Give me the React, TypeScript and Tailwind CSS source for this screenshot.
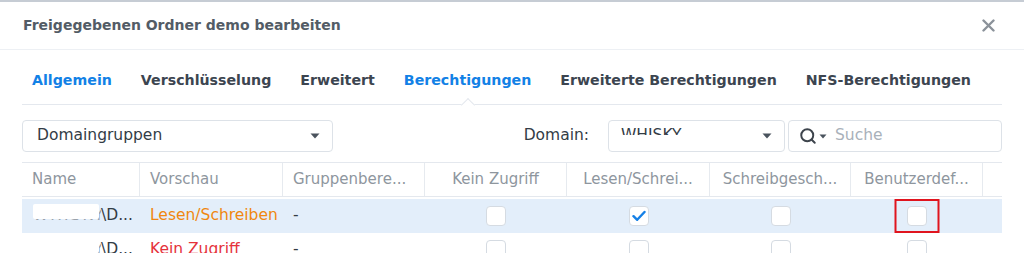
import { Search } from 'lucide-react'

const tabs = [
  { label: 'Allgemein', active: false, blue: true },
  { label: 'Verschlüsselung', active: false, blue: false },
  { label: 'Erweitert', active: false, blue: false },
  { label: 'Berechtigungen', active: true, blue: true },
  { label: 'Erweiterte Berechtigungen', active: false, blue: false },
  { label: 'NFS-Berechtigungen', active: false, blue: false },
]

const cols = ['Name', 'Vorschau', 'Gruppenbere...', 'Kein Zugriff', 'Lesen/Schrei...', 'Schreibgesch...', 'Benutzerdef...']

function Caret() {
  return (
    <svg width="10" height="6" viewBox="0 0 10 6" className="shrink-0">
      <path d="M0.5 0.5 L9.5 0.5 L5 5.5 Z" fill="#4a535d" />
    </svg>
  )
}

function Checkbox({ checked = false }: { checked?: boolean }) {
  return (
    <div className="w-[20px] h-[20px] rounded-[4px] border border-[#d5dbe2] bg-white flex items-center justify-center">
      {checked && (
        <svg width="14" height="12" viewBox="0 0 14 12">
          <path d="M1.5 6.2 L5.2 9.8 L12.5 2" fill="none" stroke="#1580e6" strokeWidth="2.4" strokeLinecap="round" strokeLinejoin="round" />
        </svg>
      )}
    </div>
  )
}

// name is blurred out in the screenshot, only the bottom edge of the letters shows
function HiddenName() {
  return (
    <div className="pl-[11px] text-[15.5px] text-[#333c46] whitespace-nowrap flex items-center">
      <span className="relative inline-block w-[68px] overflow-hidden tracking-[2px] text-[#9aa1aa]">
        WHISKY
        <span className="absolute left-0 top-0 w-[66px] h-[15px] bg-white rounded-[2px]" />
      </span>
      <span>\D...</span>
    </div>
  )
}

export default function App() {
  const rows = [
    { preview: 'Lesen/Schreiben', color: 'text-[#f0870f]', checks: [false, true, false, false], selected: true },
    { preview: 'Kein Zugriff', color: 'text-[#e5323b]', checks: [false, false, false, false], selected: false },
  ]

  return (
    <div className="w-[1024px] h-[253px] overflow-hidden bg-white" style={{ fontFamily: '"DejaVu Sans", Verdana, sans-serif' }}>
      <div className="h-[2px] bg-[#c6ccd4]" />

      {/* header */}
      <div className="h-[48px] flex items-center justify-between pl-[23px] pr-[29px] border-b border-[#edf0f4]">
        <h1 className="text-[14px] font-bold text-[#535c66]">Freigegebenen Ordner demo bearbeiten</h1>
        <svg width="13" height="13" viewBox="0 0 13 13">
          <path d="M1.5 1.5 L11.5 11.5 M11.5 1.5 L1.5 11.5" stroke="#8b929a" strokeWidth="2.4" strokeLinecap="round" />
        </svg>
      </div>

      <div className="px-[22px]">
        {/* tabs */}
        <div className="flex gap-[29px] pl-[10px] pt-[21px] pb-[14px] border-b border-[#e4e8ee]">
          {tabs.map((t) => (
            <div
              key={t.label}
              className={`relative text-[14.2px] leading-[19px] font-bold whitespace-nowrap ${t.blue ? 'text-[#1281e6]' : 'text-[#3c4550]'}`}
            >
              {t.label}
              {t.active && (
                <div className="absolute left-1/2 -translate-x-1/2 top-[29px] w-[10px] h-[10px] rotate-45 bg-white border-l border-t border-[#e4e8ee]" />
              )}
            </div>
          ))}
        </div>

        {/* toolbar */}
        <div className="flex items-center mt-[15px] h-[32px] text-[15.5px] text-[#333c46]">
          <div className="w-[311px] h-[32px] rounded-[4px] border border-[#dde2e8] flex items-center justify-between pl-[14px] pr-[12px]">
            <span>Domaingruppen</span>
            <Caret />
          </div>
          <div className="flex-1" />
          <span className="mr-[19px]">Domain:</span>
          <div className="w-[177px] h-[32px] rounded-[4px] border border-[#dde2e8] flex items-center justify-between pl-[12px] pr-[12px]">
            <span className="relative">
              WHISKY
              <span className="absolute left-0 right-0 top-[11px] h-[10px] bg-white" />
            </span>
            <Caret />
          </div>
          <div className="ml-[3px] w-[214px] h-[32px] rounded-[4px] border border-[#dde2e8] flex items-center pl-[10px] gap-[2px]">
            <Search size={18} strokeWidth={2.6} color="#3d444c" />
            <svg width="8" height="5" viewBox="0 0 8 5">
              <path d="M0.5 0.5 L7.5 0.5 L4 4.5 Z" fill="#4a535d" />
            </svg>
            <span className="ml-[6px] text-[#a9b1ba]">Suche</span>
          </div>
        </div>

        {/* table */}
        <div className="mt-[10px] border-t border-[#e4e8ee]">
          <div className="grid grid-cols-[118px_143px_142px_142px_143px_141px_132px_1fr] h-[34px] border-b border-[#e4e8ee] text-[15px] text-[#8e969e]">
            {cols.map((c, i) => (
              <div
                key={c}
                className={`flex items-center whitespace-nowrap border-r border-[#e6eaef] ${i < 3 ? 'pl-[10px]' : 'justify-center'}`}
              >
                {c}
              </div>
            ))}
            <div />
          </div>

          <div className="mt-[2px]">
            {rows.map((r, ri) => (
              <div
                key={ri}
                className={`grid grid-cols-[118px_143px_142px_142px_143px_141px_132px_1fr] h-[34px] text-[15.5px] ${r.selected ? 'bg-[#e3eefa]' : 'bg-white'}`}
              >
                <div className="flex items-center">
                  <HiddenName />
                </div>
                <div className={`flex items-center pl-[10px] whitespace-nowrap ${r.color}`}>{r.preview}</div>
                <div className="flex items-center pl-[10px] text-[#333c46]">-</div>
                {r.checks.map((c, ci) => (
                  <div key={ci} className="relative flex items-center justify-center">
                    <Checkbox checked={c} />
                    {ri === 0 && ci === 3 && (
                      <div className="absolute left-1/2 top-0 -translate-x-1/2 w-[45px] h-[34px] border-2 border-[#e0141e]" />
                    )}
                  </div>
                ))}
                <div />
              </div>
            ))}
          </div>
        </div>
      </div>
    </div>
  )
}
